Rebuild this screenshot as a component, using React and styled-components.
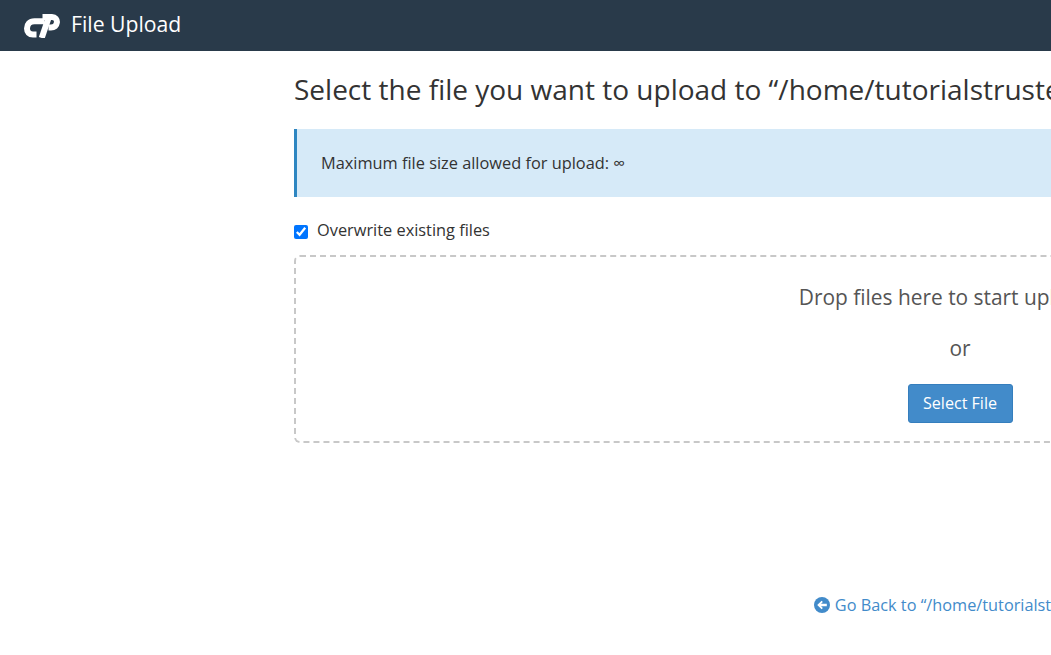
import React from 'react';
import styled, { createGlobalStyle } from 'styled-components';

const GlobalStyle = createGlobalStyle`
    html, body {
        margin: 0;
        padding: 0;
        height: 100%;
        overflow: hidden;
        background: #fff;
        font-family: "Open Sans", sans-serif;
        color: #333;
    }
`;

const TopBar = styled.header`
    height: 51px;
    background: #293a4a;
    display: flex;
    align-items: center;
    padding-left: 24px;
    color: #fff;
`;

const AppTitle = styled.div`
    font-size: 21.2px;
    margin-left: 11px;
    margin-top: -4px;
`;

const Content = styled.main`
    width: 1332px;
    margin-left: 294px;
`;

const Heading = styled.h1`
    font-size: 28px;
    font-weight: 400;
    line-height: 36px;
    margin: 20px 0 22px;
    white-space: nowrap;
    color: #333;
`;

const Notice = styled.div`
    height: 68px;
    box-sizing: border-box;
    background: #d6eaf8;
    border-left: 3px solid #2e86c1;
    padding-left: 24px;
    display: flex;
    align-items: center;
    font-size: 16.35px;
    color: #333;
`;

const OverwriteRow = styled.label`
    display: flex;
    align-items: center;
    height: 22px;
    margin-top: 22px;
    font-size: 16.35px;
    color: #333;
`;

const Checkbox = styled.input`
    width: 14px;
    height: 14px;
    margin: 3px 9px 0 0;
    accent-color: #0075ff;
`;

const DropZone = styled.div`
    margin-top: 14px;
    height: 188px;
    box-sizing: border-box;
    border: 2px dashed #c8c8c8;
    border-radius: 6px;
    display: flex;
    flex-direction: column;
    align-items: center;
    color: #555;
`;

const DropText = styled.div`
    font-size: 20.9px;
    line-height: 28px;
    margin-top: 26px;
`;

const OrText = styled.div`
    font-size: 20.9px;
    line-height: 28px;
    margin-top: 23px;
`;

const SelectButton = styled.button`
    margin-top: 22px;
    width: 105px;
    height: 39px;
    padding: 0 0 2px;
    background: #428bca;
    border: 1px solid #357ebd;
    border-radius: 3px;
    color: #fff;
    font-family: inherit;
    font-size: 16.1px;
`;

const BackRow = styled.div`
    margin-top: 151px;
    display: flex;
    justify-content: center;
`;

const BackLink = styled.a`
    display: inline-flex;
    align-items: center;
    gap: 5px;
    font-size: 16.3px;
    line-height: 22px;
    color: #428bca;
    text-decoration: none;
`;

const CpanelLogo = () => (
    <svg width="36" height="24" viewBox="0 0 36 24" fill="none" stroke="#fff" strokeWidth="6">
        <path d="M20.500 7.200H10.500C5.500 7.200 3 10.500 3 14.500C3 18 5.200 20.500 9 20.500H12.500" />
        <path d="M18.500 3H28C31.300 3 33.200 5.500 32.900 8.500C32.600 11.500 30.300 13.500 27 13.500H24.500" />
        <path d="M24.500 4L17.700 24" />
    </svg>
);

const BackIcon = () => (
    <svg width="16" height="16" viewBox="0 0 16 16">
        <circle cx="8" cy="8" r="8" fill="#428bca" />
        <path d="M3.200 8L7.600 3.700l1.300 1.300-1.900 1.800h5.800v2.400H7l1.900 1.800-1.300 1.300z" fill="#fff" />
    </svg>
);

export default function App() {
    return (
        <>
            <GlobalStyle />
            <TopBar>
                <CpanelLogo />
                <AppTitle>File Upload</AppTitle>
            </TopBar>
            <Content>
                <Heading>Select the file you want to upload to “/home/tutorialstrusted/public_html”</Heading>
                <Notice>Maximum file size allowed for upload: ∞</Notice>
                <OverwriteRow>
                    <Checkbox type="checkbox" defaultChecked />
                    Overwrite existing files
                </OverwriteRow>
                <DropZone>
                    <DropText>Drop files here to start uploading</DropText>
                    <OrText>or</OrText>
                    <SelectButton>Select File</SelectButton>
                </DropZone>
                <BackRow>
                    <BackLink href="#">
                        <BackIcon />
                        Go Back to “/home/tutorialstrusted”
                    </BackLink>
                </BackRow>
            </Content>
        </>
    );
}
